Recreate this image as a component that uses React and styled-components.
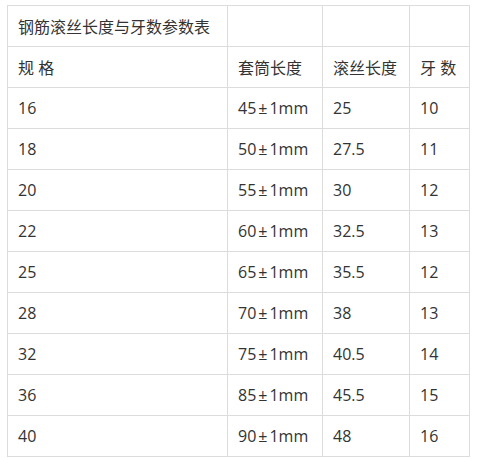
import React from "react";
import styled, { createGlobalStyle } from "styled-components";

const GlobalStyle = createGlobalStyle`
  html, body {
    margin: 0;
    padding: 0;
    background: #fff;
  }
`;

const rows = [
  ["16", "45±1mm", "25", "10"],
  ["18", "50±1mm", "27.5", "11"],
  ["20", "55±1mm", "30", "12"],
  ["22", "60±1mm", "32.5", "13"],
  ["25", "65±1mm", "35.5", "12"],
  ["28", "70±1mm", "38", "13"],
  ["32", "75±1mm", "40.5", "14"],
  ["36", "85±1mm", "45.5", "15"],
  ["40", "90±1mm", "48", "16"],
];

const widths = [220, 95, 87, 60];

// puts a little room around the ± sign, like the source font does
function renderValue(v) {
  if (!v.includes("±")) return v;
  const [a, b] = v.split("±");
  return (
    <>
      {a}
      <PlusMinus>±</PlusMinus>
      {b}
    </>
  );
}

function App() {
  return (
    <Page>
      <GlobalStyle />
      <Table>
        <colgroup>
          {widths.map((w, i) => (
            <col key={i} style={{ width: w }} />
          ))}
        </colgroup>
        <tbody>
          <tr>
            <Cell>钢筋滚丝长度与牙数参数表</Cell>
            <Cell />
            <Cell />
            <Cell />
          </tr>
          <tr>
            <Cell>规 格</Cell>
            <Cell>套筒长度</Cell>
            <Cell>滚丝长度</Cell>
            <Cell>牙 数</Cell>
          </tr>
          {rows.map((r, i) => (
            <tr key={i}>
              {r.map((v, j) => (
                <Cell key={j}>{renderValue(v)}</Cell>
              ))}
            </tr>
          ))}
        </tbody>
      </Table>
    </Page>
  );
}

export default App;

// Styled components
const Page = styled.div`
  padding: 5px 0 0 7px;
`;

const Table = styled.table`
  table-layout: fixed;
  width: 463px;
  border-collapse: separate;
  border-spacing: 0;
  border-top: 1px solid #dcdcdc;
  border-left: 1px solid #dcdcdc;
  font-family: "Open Sans", "Noto Sans CJK SC", sans-serif;
  font-size: 16px;
  color: #333;
`;

const Cell = styled.td`
  box-sizing: border-box;
  height: 41px;
  padding: 0 0 0 10px;
  border-right: 1px solid #dcdcdc;
  border-bottom: 1px solid #dcdcdc;
  vertical-align: middle;
  white-space: nowrap;
`;

const PlusMinus = styled.span`
  padding: 0 2px;
`;
